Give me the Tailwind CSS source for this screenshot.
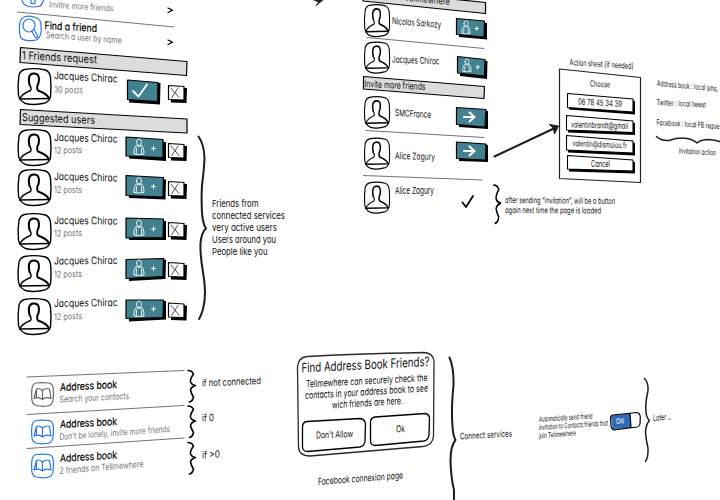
<!DOCTYPE html>
<html lang="en">
<head>
<meta charset="utf-8">
<title>Find friends wireframe</title>
<script src="https://cdn.jsdelivr.net/npm/@tailwindcss/browser@4"></script>
</head>
<body class="bg-white">
<main class="relative w-[720px] h-[500px] overflow-hidden bg-white">
<svg class="absolute inset-0 block fill-none stroke-black" width="720" height="500" viewBox="0 0 720 500" stroke-linecap="round" stroke-linejoin="round">
  <defs>
    <symbol id="avatar" viewBox="0 0 34 37" preserveAspectRatio="none" overflow="visible">
      <path fill="#fff" stroke-width="1.4" d="M7 1.5Q17-.5 28 2Q32 3.500 33 9Q34 19 33 29Q31 35 25 35.500Q15 37.500 8 35.500Q2 33 1 27Q0 17 1.500 7Q3 2.500 7 1.500Z"/>
      <path stroke-width="1.400" d="M2.500 31Q4 26 13 22.500Q14.500 20.500 12 17"/>
      <path stroke-width="2" d="M12 17Q9.500 6 16 5.500Q23 5 21 15Q18.500 20 20.500 22.500Q29 25.500 31.500 30"/>
      <path stroke-width="1.700" d="M2.500 31L31.500 30.500"/>
    </symbol>
    <symbol id="person" viewBox="0 0 12 17" overflow="visible">
      <path stroke="#fff" stroke-width=".9" d="M3.500 4Q3.500 .5 6 .5T8.500 4Q8 7 6 7T3.500 4ZM4 6.500Q1 7.500 .8 15.500Q5.500 16.500 11 15.500Q11 8 8 6.500M3.500 9.500L3.200 15.500M8.500 9.500L8.700 15.500M4 7.500Q6 9 8 7.500"/>
    </symbol>
    <symbol id="book" viewBox="0 0 23 25" overflow="visible">
      <path stroke-width="1.200" d="M5 1Q11 .2 18 1Q22 2 22.300 7Q22.800 13 22 18.500Q21 23.500 16 24Q10 24.800 5 23.500Q1 22 .8 17Q.3 11 1 6Q2 1.800 5 1Z"/>
      <path stroke-width="1.200" d="M11.500 8.500Q8 5.500 5.500 7L3 16.500Q8 14.500 11.500 17.500Q15 14.500 20 16.500L18.500 7Q15 5.500 11.500 8.500V17.500M5.500 7V15.500"/>
    </symbol>
    <symbol id="dismiss" viewBox="0 0 19 18" overflow="visible">
      <path fill="#000" stroke="none" d="M2 3H19L18.500 18L3 17.500Z"/>
      <path fill="#fff" stroke-width="1.200" d="M.5 .5L16 1.500V15L.5 14.500Z"/>
      <path stroke="#555" stroke-width="1" d="M3 3L11 12.500M10 3L3.500 13"/>
    </symbol>
    <symbol id="curl" viewBox="0 0 9 33" preserveAspectRatio="none" overflow="visible">
      <path stroke-width="1.600" d="M1 .5Q5 .5 6.500 4Q3 9 3.500 12Q5 15 8.500 15.500Q4 17 3.500 20Q4 23 6.500 27Q5.500 31.500 2.500 32"/>
    </symbol>
  </defs>

  <!-- section headers -->
  <g fill="#dcdcdc" stroke-width="1.200">
    <path d="M20.500 47.500L187 61.500L186.500 75.500L20 62.500Z"/>
    <path d="M20.500 109.500L187 119L187 133L20 124.500Z"/>
    <path d="M363-10L485.500 2.500L485.500 13.500L363 1Z"/>
    <path d="M363.500 76.500L484.500 86.500L484 98.500L363.500 89Z"/>
  </g>
  <!-- separators -->
  <g stroke="#77717c" stroke-width="1">
    <path d="M17.500 12L174 27"/>
    <path d="M367 37.500L484 48.500"/><path d="M366 130.500L484 137.500"/><path d="M363.500 175.500L482 180"/>
    <path d="M27 377L184 370.500"/><path d="M27 414.500L184 405.500"/><path d="M27 448.500L184 438"/>
  </g>

  <!-- search and invite icons -->
  <g stroke="#2876e8" stroke-width="1.200">
    <path d="M25 16.500Q31 15.500 37 18Q41 20 41 25Q42 31 40 36Q38 41 31 40.500Q24 41 21 38Q19 34 19.500 27Q19 19 25 16.500Z"/>
    <ellipse cx="29" cy="25.500" rx="6" ry="6.500"/><path d="M31.500 31L35.500 37.500Q38 38 37.500 35.500L33.500 29"/>
    <path d="M22-1Q22 4 27 6Q33 8 40 6Q44 3 43.500-2M31-2V3Q33 4.500 35 3V-2"/>
  </g>

  <use href="#avatar" x="17.500" y="68" width="34" height="37"/>
  <use href="#avatar" x="17.500" y="129" width="34" height="37"/>
  <use href="#avatar" x="17.500" y="169" width="34" height="37"/>
  <use href="#avatar" x="17.500" y="213" width="34" height="37"/>
  <use href="#avatar" x="17.500" y="255" width="34" height="37"/>
  <use href="#avatar" x="17.500" y="298" width="34" height="37"/>
  <use href="#avatar" x="364" y="4" width="26" height="33"/>
  <use href="#avatar" x="364" y="41.500" width="26" height="32"/>
  <use href="#avatar" x="364" y="96" width="26" height="32.500"/>
  <use href="#avatar" x="364" y="137.500" width="26" height="32"/>
  <use href="#avatar" x="364" y="181.500" width="26" height="32"/>

  <!-- teal buttons: shadow, then face -->
  <g fill="#000" stroke="none">
    <path d="M130 82L160.500 83L160 104.500L129 102.500Z"/>
    <path d="M128 139L166 142L166 161L129 158.500Z"/><path d="M128 178L166 179.500L165.500 199.500L129 198Z"/>
    <path d="M128 221L166 221L166 240L129 240Z"/><path d="M128 262L166 259.500L165.500 279L129 281Z"/><path d="M128 302L166 301L166 319.500L129 321.500Z"/>
    <path d="M459 21L487 23L487 39.500L459 37Z"/><path d="M460 59L487.500 61L487 79L460 76Z"/>
    <path d="M459 110L488 111L488 129L459 127Z"/><path d="M459 144L488 145L488 162L459 161Z"/>
  </g>
  <g fill="#418190" stroke-width="1.200">
    <path d="M127.500 80L158 82.500L157.500 101.500L127.500 99.500Z"/>
    <path d="M126 137L163 139.500L163 157.500L126 156Z"/><path d="M126 175.500L163.500 177.500L163 197L126 195.500Z"/>
    <path d="M126 218L163.500 219L163 237.500L126 238Z"/><path d="M126 259.500L163.500 258.500L163 276.500L126 278.500Z"/><path d="M126 300L163.500 300L163 317.500L126 318.500Z"/>
    <path d="M456.500 18.500L484.500 21L484 37L456.500 34.500Z"/><path d="M457.500 56.500L485 59.500L484.500 76L457.500 73Z"/>
    <path d="M456.500 107.500L486 109.500L485 127L456.500 124.500Z"/><path d="M456.500 142L486 144L485.500 160L456.500 158.500Z"/>
  </g>
  <path stroke="#fff" stroke-width="1.800" d="M133 91L138.500 96.500L147 84.500"/>
  <g stroke="#fff" stroke-width="2"><path d="M464 117H474M469.500 112.500L474.500 117L469.500 121.500"/><path d="M464 151H474M469.500 146.500L474.500 151L469.500 155.500"/></g>
  <use href="#person" x="133" y="138.500" width="12" height="17"/>
  <use href="#person" x="133" y="177" width="12" height="17"/>
  <use href="#person" x="133" y="219.500" width="12" height="17"/>
  <use href="#person" x="133" y="259.500" width="12" height="17"/>
  <use href="#person" x="133" y="300.500" width="12" height="17"/>
  <use href="#person" x="461" y="20" width="10" height="15"/>
  <use href="#person" x="462" y="58" width="10" height="15"/>
  <path stroke="#fff" stroke-width="1" d="M151.500 148.500H155.500M153.500 146.500V150.500M151.500 186.500H155.500M153.500 184.500V188.500M151.500 229H155.500M153.500 227V231M151.500 268.500H155.500M153.500 266.500V270.500M151.500 309H155.500M153.500 307V311M475 28.500H478.500M476.700 27V30.500M476 67H479.500M477.700 65.500V69"/>

  <use href="#dismiss" x="168" y="85" width="19" height="18"/>
  <use href="#dismiss" x="168" y="143" width="19" height="18"/>
  <use href="#dismiss" x="168" y="181" width="19" height="18"/>
  <use href="#dismiss" x="168" y="222" width="19" height="18"/>
  <use href="#dismiss" x="168" y="262" width="19" height="18"/>
  <use href="#dismiss" x="168" y="302.500" width="19" height="18"/>

  <path stroke-width="1.200" d="M168 8L172.500 10.200L168 12.500M168 40L172.500 42.200L168 44.500"/>
  <path stroke-width="1.800" d="M462.500 202.500L466 207L473 196"/>

  <!-- large braces and arrows -->
  <g stroke="#1d1b22" stroke-width="2">
    <path d="M198.500 136.500Q204 144 204.500 158Q204 170 202 185Q201 205 202.500 218Q204 226 206 228.500Q201.500 232 200.500 243Q200 255 203 272Q207 295 203 309Q201 316 199 319"/>
    <path d="M449.500 357.500Q454 368 453.500 385Q451 410 452.500 426Q453 436 455.500 440Q450.500 446 450.500 461Q451 478 454 490V501"/>
    <path stroke-width="1.500" d="M644.500 378.500Q648.500 382 648 391Q645 403 646 412Q646.500 418 649.500 420.500Q646 424 645.500 432Q646 440 648 448Q648.500 457 645.500 461.500"/>
    <path stroke-width="1.500" d="M656.500 136.500Q661 141 669 140.500Q679 137 687 138.500Q694 140 697 143Q701 139.500 709 139.500Q716 140 721 142"/>
    <path d="M494.500 156.500L556 127.500"/>
    <path fill="#1d1b22" stroke-width="1" d="M549.500 124.500L558.500 126L554.500 134L553.500 128.500Z"/>
    <path fill="#1d1b22" stroke-width="1" d="M314 0L319 2L316 5.500L324-1L314-3Z"/>
  </g>
  <use href="#curl" x="187" y="370" width="9" height="33"/>
  <use href="#curl" x="187" y="405.500" width="9" height="33"/>
  <use href="#curl" x="187" y="442" width="9" height="33"/>
  <use href="#curl" x="493" y="184.500" width="8" height="40"/>

  <!-- action sheet -->
  <path stroke="#222" stroke-width="1.200" d="M559.500 69L640.500 77.500V182.500L559.500 178.500Z"/>
  <g fill="#000" stroke="none">
    <path d="M569 96L635 101V114.500L569 109.500Z"/><path d="M569 118L635 123V135L568 132.500Z"/><path d="M568 138L635 143V155.500L568 152.500Z"/><path d="M569 158L635 162V173.500L569 171.500Z"/>
  </g>
  <g fill="#fff" stroke-width="1.100">
    <path d="M567.500 93.500L633 99V112L567.500 107.500Z"/><path d="M566.500 115.500L633 121V132.500L566.500 130Z"/><path d="M566.500 135.500L633 141V153L566.500 150Z"/><path d="M567.500 155.500L633 160V171L567.500 169Z"/>
  </g>

  <use href="#book" class="stroke-[#666]" x="31" y="382" width="23" height="25"/>
  <use href="#book" class="stroke-[#2876e8]" x="31" y="419.500" width="23" height="25"/>
  <use href="#book" class="stroke-[#2876e8]" x="31" y="453.500" width="23" height="25"/>

  <!-- permission dialog -->
  <path stroke="#30262b" stroke-width="1.300" d="M307 356.500Q350 354 424 352.500Q433 353 434 361L433.500 436Q433 445 423 446.500L310 456Q299 456 298.500 447L297.500 367Q298 357.500 307 356.500Z"/>
  <path stroke-width="1.300" d="M307 421.500L360 418.500Q365 419 365.500 424L365 441Q364.500 446 360 447L307.500 451.500Q303 451.500 302.500 447V427Q302.500 422 307 421.500ZM375 417L425 413.500Q429 414 429.500 418L429 435Q428.500 440 424 441L375 445.500Q370.500 445 370.500 441V422Q370.500 418 375 417Z"/>

  <!-- switch -->
  <path fill="#2e6bb5" stroke="none" d="M611 415.500L630 413.500L631 428L612.500 429Z"/>
  <path stroke-width="1.200" d="M612.500 415L637 412.500Q640 413 640.300 417L640 424Q639.500 426.500 637 427L614 429.800Q611.500 429.500 611 426L610.500 419Q610.500 415.500 612.500 415ZM630 413.500L631 427.500"/>
</svg>
<svg id="labels" class="absolute inset-0 block font-[Inter,sans-serif] [font-feature-settings:'cv11']" width="720" height="500" viewBox="0 0 720 500"></svg>
</main>
<script>
// Labels on the canvas: start x, start baseline, end x, end baseline, size, kind, text
const kinds = {
  k: 'fill-[#111] stroke-none',
  m: 'fill-black stroke-black [stroke-width:0.2px]',
  g: 'fill-[#777] stroke-none',
  w: 'fill-white stroke-none'
};
const labels = [
  [49,7.5,113.5,11.5,9,'g','Invitre more friends'],
  [44.5,29,97,32,10.5,'m','Find a friend'],
  [46,38,121.5,43.5,9,'g','Search a user by name'],
  [22,59,97,63.5,11,'k','1 Friends request'],
  [54,79,117.5,82.5,10.5,'k','Jacques Chirac'], [54,92.5,83,93.5,9,'g','30 posts'],
  [22,121,95,124,11,'k','Suggested users'],
  [54,141,117.5,142.5,10.5,'k','Jacques Chirac'], [54,153.5,82,153,9,'g','12 posts'],
  [54,180,117.5,181.5,10.5,'k','Jacques Chirac'], [54,192.5,82,192.5,9,'g','12 posts'],
  [54,224,117.5,224.5,10.5,'k','Jacques Chirac'], [54,236.5,82,236,9,'g','12 posts'],
  [54,264.5,117.5,264,10.5,'k','Jacques Chirac'], [54,277.5,82,277,9,'g','12 posts'],
  [54,307,117.5,306,10.5,'k','Jacques Chirac'], [54,320,82,319,9,'g','12 posts'],
  [212,207,258.5,207,9.5,'k','Friends from'], [212,219,285,219,9.5,'k','connected services'],
  [212,231,277,231,9.5,'k','very active users'], [212,242.5,276,242.5,9.5,'k','Users around you'],
  [212,254.5,267.5,254.5,9.5,'k','People like you'],
  [365,-3,450,5,9.5,'k','Friends on Tellmewhere'],
  [392,24,441,28,9.5,'k','Nicolas Sarkozy'], [392,62.5,439.5,64.5,9.5,'k','Jacques Chirac'],
  [364.5,87,425.5,90,9.5,'k','Invite more friends'], [395,116,431,118,9.5,'k','SMCFrance'],
  [395,159,435,160,9.5,'k','Alice Zagury'], [395,193.5,434,193.5,9.5,'k','Alice Zagury'],
  [505,203,615,204,8.5,'k','after sending “invitation”, will be a button'],
  [505,213,601,213.5,8.5,'k','again next time the page is loaded'],
  [569.5,65,633.5,69,8.5,'k','Action sheet (if needed)'],
  [590,86.5,610,87.5,8.5,'k','Choose'], [578,104.5,622,107,8.5,'k','06 78 45 34 39'],
  [571,127.5,628,129,8.5,'k','valentinbrandt@gmail'], [572.5,146,627,148.5,8.5,'k','valentin@dismoiou.fr'],
  [591,167,610,167,8.5,'k','Cancel'],
  [657,86,718,91.5,8,'k','Address book : local sms,'], [656.5,105,706,107.5,8,'k','Twitter : local tweet'],
  [656.5,125,719.5,129,8,'k','Facebook : local FB reque'], [679,153.5,716,155.5,8,'k','Invitation action'],
  [60,391,117,388,10.5,'m','Address book'], [59.5,402.5,129,399,9,'g','Search your contacts'],
  [60,428,117,425,10.5,'m','Address book'], [59.5,440,170,432,9,'g',"Don't be lonely, invite more friends"],
  [60,462,117,458.5,10.5,'m','Address book'], [59.5,474,143.5,467,9,'g','2 friends on Tellmewhere'],
  [202,386.5,261,384,10,'k','if not connected'], [202,421.5,214,421,10,'k','if 0'], [202,458.5,220,457.5,10,'k','if >0'],
  [301.5,372.5,429.5,366,13,'k','Find Address Book Friends?'],
  [306,387.5,427.5,381,10,'k','Tellmewhere can securely check the'],
  [305,399,428,391.5,10,'k','contacts in your address book to see'],
  [332,408.5,403,404,10,'k','wich friends are here.'],
  [316,438.5,353,437,9.5,'k',"Don't Allow"], [396,432.5,405,432,9.5,'k','Ok'],
  [318,485,403,478.5,9.5,'k','Facebook connexion page'], [460,439.5,512,436.5,9,'k','Connect services'],
  [539,422,592.5,418.5,7.5,'k','Automatically send friend'],
  [539,430,608,425.5,7.5,'k','invitation to Contacts friends that'],
  [539,438.5,576,435.5,7.5,'k','join Tellmewhere'],
  [616,424,624,423.5,7.5,'w','ON'], [653,421,671,419.5,8.5,'k','Later ..']
];
const layer = document.getElementById('labels');
for (const [x, y, x2, y2, size, kind, text] of labels) {
  const el = document.createElementNS('http://www.w3.org/2000/svg', 'text');
  el.setAttribute('class', kinds[kind]);
  el.setAttribute('font-size', size);
  el.setAttribute('textLength', x2 - x);
  el.setAttribute('lengthAdjust', 'spacingAndGlyphs');
  el.setAttribute('transform', `matrix(1 ${(y2 - y) / (x2 - x)} 0 1 ${x} ${y})`);
  el.textContent = text;
  layer.append(el);
}
</script>
</body>
</html>
